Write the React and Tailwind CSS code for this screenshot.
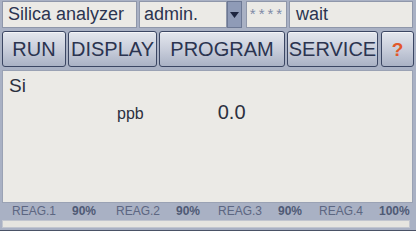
import React from 'react';

const btn =
  "h-full flex items-center justify-center rounded-[3px] border border-[#3b4663] bg-gradient-to-b from-[#e4e7ee] via-[#c9cedb] to-[#aab2c5] text-[#2b3450] text-[20px] leading-none shadow-[inset_0_1px_0_#f4f5f8]";

const box = "h-full flex items-center bg-[#ebeae6] border border-[#8f97aa] text-[#2b3450]";

function Reag({ name, val, w }) {
  return (
    <div className={"flex items-center " + w}>
      <span className="w-[60px] text-[12px] text-[#5c6681]">{name}</span>
      <span className="text-[12px] font-bold text-[#4f5a75]">{val}</span>
    </div>
  );
}

export default function App() {
  return (
    <div
      className="w-[416px] h-[231px] bg-[#a9b1c4] flex flex-col overflow-hidden"
      style={{ fontFamily: '"Liberation Sans", Arial, sans-serif' }}
    >
      <div className="h-[27px] mt-[1px] flex pl-[2px] pr-[3px]">
        <div className={box + " w-[135px] pl-[5px] text-[18px]"}>Silica analyzer</div>
        <div className={box + " ml-[2px] w-[88px] pl-[4px] text-[18px]"}>admin.</div>
        <div className="h-full w-[15px] bg-[#8f9bb7] border border-[#6c7894] flex items-center justify-center">
          <svg width="9" height="6" viewBox="0 0 9 6"><path d="M0 0h9L4.5 6z" fill="#1d2540" /></svg>
        </div>
        <div className={box + " ml-[4px] w-[41px] justify-center pl-[2px] text-[15px] text-[#7f8aa6] tracking-[3px]"}>****</div>
        <div className={box + " ml-[2px] flex-1 pl-[6px] text-[18px]"}>wait</div>
      </div>
      <div className="h-[36px] mt-[3px] flex gap-[2px] pl-[2px] pr-[2px]">
        <div className={btn + " w-[64px]"}>RUN</div>
        <div className={btn + " w-[89px]"}>DISPLAY</div>
        <div className={btn + " w-[126px]"}>PROGRAM</div>
        <div className={btn + " w-[91px]"}>SERVICE</div>
        <div className={btn + " flex-1 ml-[1px]"}>
          <span className="text-[#e2582a] font-bold text-[19px]">?</span>
        </div>
      </div>
      <div className="h-[133px] mt-[3px] mx-[2px] mr-[3px] bg-[#ebeae6] border border-[#9aa2b4]">
        <div className="pl-[6px] pt-[5px] text-[19px] leading-none text-[#2b3040]">Si</div>
        <div className="flex items-baseline mt-[7px]">
          <span className="ml-[114px] text-[16px] leading-none text-[#2b3040]">ppb</span>
          <span className="ml-[74px] text-[20px] leading-none text-[#2b3040]">0.0</span>
        </div>
      </div>
      <div className="h-[16px] flex items-center pl-[12px]">
        <Reag name="REAG.1" val="90%" w="w-[104px]" />
        <Reag name="REAG.2" val="90%" w="w-[102px]" />
        <Reag name="REAG.3" val="90%" w="w-[101px]" />
        <Reag name="REAG.4" val="100%" w="" />
      </div>
      <div className="h-[8px] mt-[1px] mx-[2px] mr-[6px] bg-[#e6e5e0] border border-[#c2c6cf]" />
      <div className="flex-1 mt-[2px] bg-[#4a5266]" />
    </div>
  );
}
